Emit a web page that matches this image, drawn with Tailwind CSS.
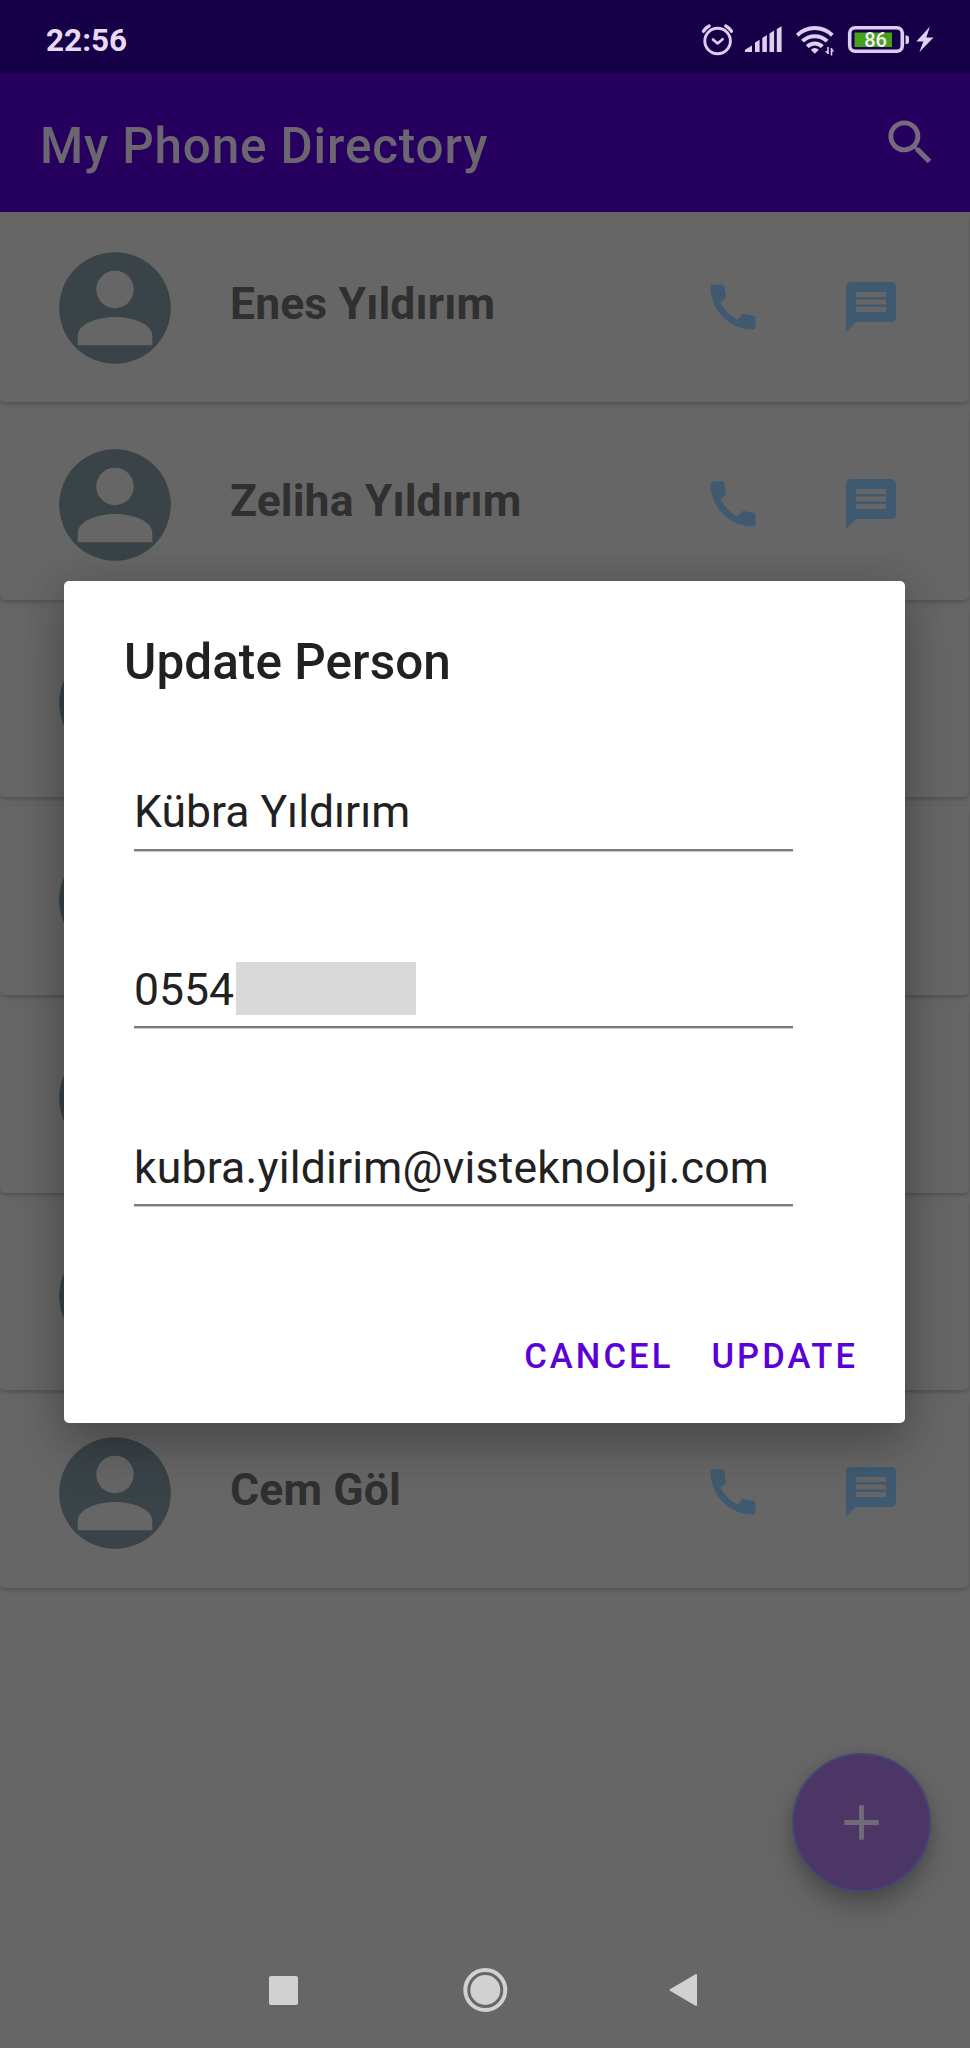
<!DOCTYPE html>
<html lang="tr">
<head>
<meta charset="utf-8">
<title>My Phone Directory</title>
<script src="https://cdn.jsdelivr.net/npm/@tailwindcss/browser@4"></script>
</head>
<body class="bg-[#666666]">
<svg class="hidden">
  <symbol id="person" viewBox="0 0 24 24"><circle cx="12" cy="12" r="10"/><circle cx="12" cy="8.67" r="3.36" fill="#666"/><path d="M5.320 18.670V17C5.320 14.800 8.900 13.600 12 13.600s6.680 1.200 6.680 3.400v1.670z" fill="#666"/></symbol>
  <symbol id="phone" viewBox="0 0 24 24"><path d="M20.01 15.38c-1.23 0-2.42-.2-3.53-.56a.977.977 0 0 0-1.01.24l-1.57 1.97c-2.83-1.35-5.48-3.9-6.89-6.83l1.95-1.66c.27-.28.35-.67.24-1.02-.37-1.11-.56-2.3-.56-3.53 0-.54-.45-.99-.99-.99H4.19C3.65 3 3 3.24 3 3.99 3 13.28 10.73 21 20.01 21c.71 0 .99-.63.99-1.18v-3.45c0-.54-.45-.99-.99-.99z"/></symbol>
  <symbol id="chat" viewBox="0 0 24 24"><path d="M20 2H4c-1.1 0-1.99.9-1.99 2L2 22l4-4h14c1.1 0 2-.9 2-2V4c0-1.1-.9-2-2-2zM6 9h12v2H6V9zm12 5H6v-2h12v2zm0-6H6V6h12v2z"/></symbol>
</svg>
<div class="relative flex h-[2048px] w-[970px] flex-col overflow-hidden bg-[#666666] font-['Roboto',sans-serif]">
  <!-- status bar -->
  <div class="flex h-[73px] shrink-0 items-center justify-between bg-[#160047] pr-[34px] pl-[46px] text-[#e6daf5]">
    <span class="pt-[9px] text-[31.5px] leading-none font-bold">22:56</span>
    <div class="flex items-center pt-[7px] text-[#dccff0]">
      <svg class="h-10 w-[40px]" viewBox="700 20 40 40" fill="none" stroke="currentColor" stroke-width="2.9" stroke-linecap="round"><circle cx="717.6" cy="41" r="12.8"/><path d="M703.5 31.2q2.2-3.6 5.6-5.3M731.4 31.2q-2.200-3.600-5.600-5.300" stroke-width="3.4"/><path d="M713 39.500l4.600 3.900 5-4.200" stroke-linejoin="round" stroke-width="2.600"/></svg>
      <svg class="h-10 w-[52px]" viewBox="740 20 52 40" fill="currentColor"><path d="M745 52v-2.300l7-4.200V52zM755 52V42.600l4.600-2.800V52zM762.300 52V38l4.600-3V52zM769.500 52V33.500l4.600-3V52zM776.800 52V29l4.800-2.700V52z"/></svg>
      <svg class="h-10 w-[54px]" viewBox="792 20 54 40" fill="none" stroke="currentColor" stroke-width="4"><path d="M797.300 35.200a25 25 0 0 1 35 0"/><path d="M802.500 41.200a17.500 17.500 0 0 1 24.600 0"/><path d="M807.300 46.600a10.500 10.500 0 0 1 15 0"/><path d="M810.800 49.700q4-3.300 8 0l-4 4z" fill="currentColor" stroke="none"/><path d="M828 47v7M831.500 48v7.500" stroke-width="1.600"/><path d="M825 51h3v3.400zM834.300 51.500h-3V48z" fill="currentColor" stroke="none"/></svg>
      <svg class="h-10 w-[66px]" viewBox="846 20 66 40"><rect x="849.700" y="27.700" width="52.600" height="23.600" rx="5.500" fill="none" stroke="currentColor" stroke-width="3.600"/><rect x="854.500" y="32.500" width="37.500" height="14.500" fill="#46a01c"/><path d="M905.500 35.500h1.200q2.300 0 2.300 2.300v4q0 2.300-2.300 2.300h-1.200z" fill="currentColor"/><text x="875.500" y="47.300" text-anchor="middle" font-size="20" font-weight="500" font-family="Roboto" fill="#f4f0fb">86</text></svg>
      <svg class="h-10 w-6" viewBox="912 20 24 40" fill="currentColor"><path d="M930 26.500L916.300 41.500h7L919.300 52.300 933.500 37.500h-7.200z"/></svg>
    </div>
  </div>
  <!-- app bar -->
  <header class="flex h-[139px] shrink-0 items-center justify-between bg-[#27005f] pr-[30px] pl-10">
    <h1 class="pt-[9px] text-[49.400px] leading-none font-medium tracking-[0.850px] text-[#6b6670]">My Phone Directory</h1>
    <svg class="size-[59px]" viewBox="0 0 24 24" fill="#756b80"><path d="M15.500 14h-.79l-.28-.27A6.471 6.471 0 0 0 16 9.500 6.500 6.500 0 1 0 9.500 16c1.610 0 3.090-.59 4.230-1.570l.27.28v.79l5 4.990L20.490 19l-4.990-5zm-6 0C7.010 14 5 11.990 5 9.500S7.010 5 9.500 5 14 7.010 14 9.500 11.990 14 9.500 14z"/></svg>
  </header>
  <!-- contact list -->
  <main class="flex flex-col gap-[8.650px] pt-px pr-px">
    <section class="flex h-[189px] items-center rounded-[5px] pr-[68px] pl-12 shadow-[0_2px_4px_rgba(0,0,0,0.22)]">
      <svg class="size-[134px]" fill="#3a4348"><use href="#person"/></svg>
      <span class="ml-[48px] grow pb-[7px] text-[44.500px] leading-none font-bold tracking-[0.120px] text-[#303030]">Enes Yıldırım</span>
      <svg class="mr-[78px] mb-[2px] size-[60px]" fill="#3f5a70"><use href="#phone"/></svg>
      <svg class="mb-[2px] size-[60px]" fill="#3f5a70"><use href="#chat"/></svg>
    </section>
    <section class="flex h-[189px] items-center rounded-[5px] pr-[68px] pl-12 shadow-[0_2px_4px_rgba(0,0,0,0.22)]">
      <svg class="size-[134px]" fill="#3a4348"><use href="#person"/></svg>
      <span class="ml-[48px] grow pb-[7px] text-[44.500px] leading-none font-bold tracking-[0.120px] text-[#303030]">Zeliha Yıldırım</span>
      <svg class="mr-[78px] mb-[2px] size-[60px]" fill="#3f5a70"><use href="#phone"/></svg>
      <svg class="mb-[2px] size-[60px]" fill="#3f5a70"><use href="#chat"/></svg>
    </section>
    <section class="flex h-[189px] items-center rounded-[5px] pl-12 shadow-[0_2px_4px_rgba(0,0,0,0.22)]"><svg class="size-[134px]" fill="#3a4348"><use href="#person"/></svg></section>
    <section class="flex h-[189px] items-center rounded-[5px] pl-12 shadow-[0_2px_4px_rgba(0,0,0,0.22)]"><svg class="size-[134px]" fill="#3a4348"><use href="#person"/></svg></section>
    <section class="flex h-[189px] items-center rounded-[5px] pl-12 shadow-[0_2px_4px_rgba(0,0,0,0.22)]"><svg class="size-[134px]" fill="#3a4348"><use href="#person"/></svg></section>
    <section class="flex h-[189px] items-center rounded-[5px] pl-12 shadow-[0_2px_4px_rgba(0,0,0,0.22)]"><svg class="size-[134px]" fill="#3a4348"><use href="#person"/></svg></section>
    <section class="flex h-[189px] items-center rounded-[5px] pr-[68px] pl-12 shadow-[0_2px_4px_rgba(0,0,0,0.22)]">
      <svg class="size-[134px]" fill="#3a4348"><use href="#person"/></svg>
      <span class="ml-[48px] grow pb-[7px] text-[44.500px] leading-none font-bold tracking-[0.120px] text-[#303030]">Cem Göl</span>
      <svg class="mr-[78px] mb-[2px] size-[60px]" fill="#3f5a70"><use href="#phone"/></svg>
      <svg class="mb-[2px] size-[60px]" fill="#3f5a70"><use href="#chat"/></svg>
    </section>
  </main>
  <!-- floating add button -->
  <button class="absolute top-[1753px] left-[792px] flex size-[139px] items-center justify-center rounded-full border-2 border-[#424775] bg-[#4c3665] shadow-[0_14px_26px_rgba(0,0,0,0.26),0_2px_12px_rgba(0,0,0,0.08)]">
    <svg class="size-[59px]" viewBox="0 0 24 24" fill="#716a78"><path d="M19 13h-6v6h-2v-6H5v-2h6V5h2v6h6v2z"/></svg>
  </button>
  <!-- system navigation -->
  <nav class="mt-auto flex h-[116px] shrink-0 items-center justify-between pr-[273px] pl-[269px] text-[#d1d1d1]">
    <span class="size-[29px] rounded-[2px] bg-[#d1d1d1]"></span>
    <svg class="size-[46px] overflow-visible" viewBox="0 0 46 46"><circle cx="25.300" cy="23" r="20" fill="none" stroke="currentColor" stroke-width="4" /><circle cx="25.300" cy="23" r="15" fill="currentColor"/></svg>
    <svg class="h-[34px] w-[29px]" viewBox="0 0 29 34" fill="currentColor" stroke="currentColor" stroke-width="2" stroke-linejoin="round"><path d="M2.500 17L28 2v30z"/></svg>
  </nav>
  <!-- update dialog -->
  <div class="absolute top-[581px] left-[64px] flex h-[842px] w-[841px] flex-col rounded-[5px] bg-white pr-[47px] pl-[60px] text-[#212121] shadow-[0_24px_50px_rgba(0,0,0,0.24),0_0_40px_rgba(0,0,0,0.12)]">
    <h2 class="mt-[56px] h-[50px] text-[49.400px] leading-[50px] font-medium tracking-[0.080px]">Update Person</h2>
    <div class="mt-[71px] ml-[10px] flex w-[659px] flex-col text-[44.500px] leading-[50px]">
      <div class="flex h-[93px] items-end border-b-2 border-[#7c7c7c] pb-[12px] shadow-[0_1px_0_#c8c8c8]"><span>Kübra Yıldırım</span></div>
      <div class="mt-[84px] flex h-[93px] items-end border-b-2 border-[#7c7c7c] pb-[11px] shadow-[0_1px_0_#c8c8c8]"><span class="w-[102px]">0554</span><span class="h-[53px] w-[180px] bg-[#d9d9d9]"></span></div>
      <div class="mt-[85px] flex h-[93px] items-end border-b-2 border-[#7c7c7c] pb-[11px] shadow-[0_1px_0_#c8c8c8]"><span class="tracking-[0.200px]">kubra.yildirim@visteknoloji.com</span></div>
    </div>
    <div class="mt-[130px] flex justify-end gap-[38px] text-[34.600px] leading-[40px] font-medium tracking-[3.050px] text-[#5b00d6]">
      <span>CANCEL</span><span>UPDATE</span>
    </div>
  </div>
</div>
</body>
</html>
